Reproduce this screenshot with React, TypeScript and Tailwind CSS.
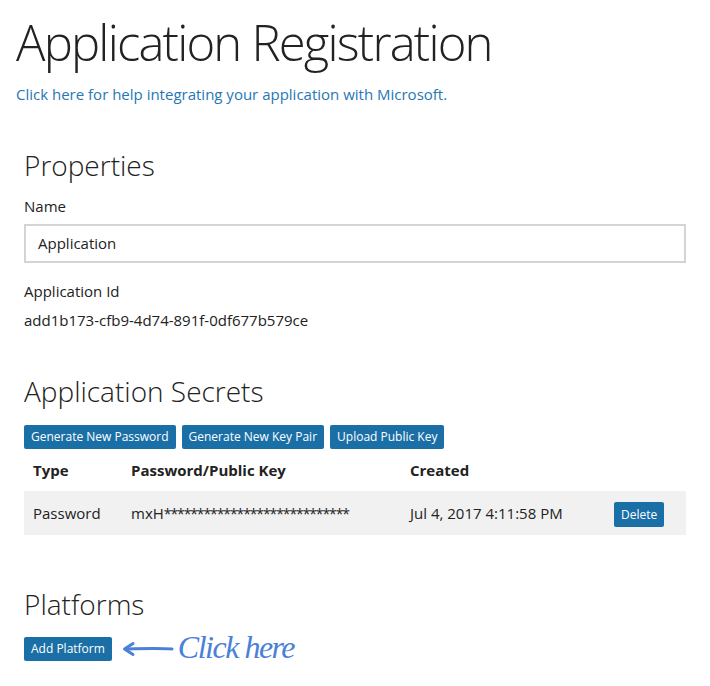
import React from 'react';

const btn = 'bg-[#1a6fa6] text-white text-[12px] leading-none px-[7px] h-[24px] flex items-center rounded-[2px]';

export default function App() {
  return (
    <div className="w-[710px] h-[686px] bg-white text-[#222] font-['Open_Sans',sans-serif] overflow-hidden">
      <div className="pl-[16px] pt-[12px]">
        <h1 className="text-[49px] font-light leading-[60px] tracking-[-1.8px]">Application Registration</h1>
        <a className="block mt-[12px] text-[15px] text-[#2677b5] leading-[20px]">
          Click here for help integrating your application with Microsoft.
        </a>
      </div>

      <div className="pl-[24px] pr-[24px] mt-[43px]">
        <h2 className="text-[28px] font-light leading-[36px]">Properties</h2>
        <div className="mt-[13px] text-[15px] leading-[20px]">Name</div>
        <div className="mt-[8px] h-[39px] border-2 border-[#d4d4d4] flex items-center pl-[12px] text-[15px]">
          Application
        </div>
        <div className="mt-[18px] text-[15px] leading-[20px]">Application Id</div>
        <div className="mt-[9px] text-[15px] leading-[20px]">add1b173-cfb9-4d74-891f-0df677b579ce</div>

        <h2 className="mt-[43px] text-[28px] font-light leading-[36px]">Application Secrets</h2>
        <div className="mt-[16px] flex gap-[6px]">
          <button className={btn}>Generate New Password</button>
          <button className={btn}>Generate New Key Pair</button>
          <button className={btn}>Upload Public Key</button>
        </div>
        <div className="mt-[5px]">
          <div className="grid grid-cols-[98px_279px_204px_1fr] h-[37px] items-center pl-[9px] pb-[5px] text-[15px] font-bold">
            <div>Type</div>
            <div>Password/Public Key</div>
            <div>Created</div>
            <div />
          </div>
          <div className="grid grid-cols-[98px_279px_204px_1fr] h-[44px] items-center pl-[9px] bg-[#f1f1f1] text-[15px]">
            <div>Password</div>
            <div>
              mxH<span className="tracking-[-1.1px] text-[14px]">****************************</span>
            </div>
            <div>Jul 4, 2017 4:11:58 PM</div>
            <div>
              <button className={btn + ' h-[25px] px-[6px] mt-[3px]'}>Delete</button>
            </div>
          </div>
        </div>

        <h2 className="mt-[51px] text-[28px] font-light leading-[36px]">Platforms</h2>
        <div className="mt-[9px] flex items-center">
          <button className={btn}>Add Platform</button>
          <svg width="54" height="20" viewBox="0 0 54 20" className="ml-[9px]">
            <path d="M51 10 C38 9 22 9.5 5 10" stroke="#4a80d8" strokeWidth="3" fill="none" strokeLinecap="round" />
            <path d="M12 4.5 L3.5 10 L12 15.5" stroke="#4a80d8" strokeWidth="3" fill="none" strokeLinecap="round" strokeLinejoin="round" />
          </svg>
          <span className="ml-[3px] pb-[4px] text-[32px] leading-none italic text-[#4a80d8] font-['Liberation_Serif',serif] tracking-[-1.5px]">Click here</span>
        </div>
      </div>
    </div>
  );
}
